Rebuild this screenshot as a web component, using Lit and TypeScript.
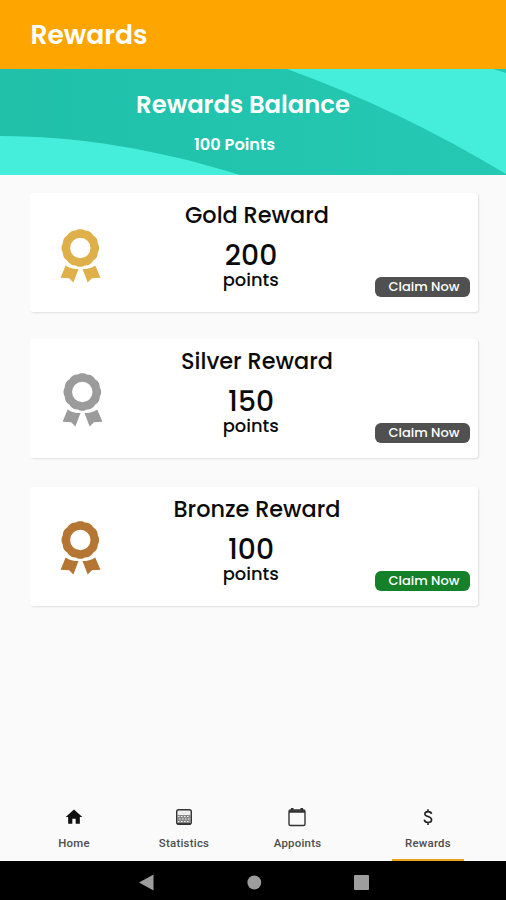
import { LitElement, html, svg, css } from "lit";
import { customElement, property } from "lit/decorators.js";

/** A single line of text, centred in a box that ends at its baseline. */
@customElement("fit-text")
class FitText extends LitElement {
  @property() text = "";
  @property({ type: Number }) size = 16;
  @property({ type: Number }) width = 100;
  @property({ type: Number }) weight = 500;

  static styles = css`
    :host { display: block; line-height: 0; }
    .line { display: block; overflow: visible; fill: currentColor; }
    .glyphs { font-family: inherit; text-anchor: middle; }
  `;

  render() {
    const h = Math.round(this.size * 2) / 2;
    return html`<svg class="line" width=${this.width} height=${h}>
      ${svg`<text class="glyphs" x=${this.width / 2} y=${h} font-size=${this.size} font-weight=${this.weight}>${this.text}</text>`}
    </svg>`;
  }
}

const scallop = (() => {
  const n = 12, steps = 144;
  let d = "";
  for (let i = 0; i < steps; i++) {
    const a = (i / steps) * Math.PI * 2;
    const r = 18.1 + 0.7 * Math.abs(Math.cos((a * n) / 2));
    d += `${i ? "L" : "M"}${(20.3 + r * Math.sin(a)).toFixed(2)} ${(19 - r * Math.cos(a)).toFixed(2)}`;
  }
  return d + "Z M30.5 19A10.2 10.2 0 1 0 10.1 19A10.2 10.2 0 1 0 30.5 19Z";
})();

interface Reward {
  name: string; points: string; tier: string; ready: boolean;
}

@customElement("reward-card")
class RewardCard extends LitElement {
  @property({ attribute: false }) reward!: Reward;

  static styles = css`
    :host { display: block; }
    .card {
      box-sizing: border-box; height: 119px; background: #fff; border-radius: 3px;
      box-shadow: 1px 1px 2px rgba(0, 0, 0, 0.11);
      display: grid; grid-template-columns: 100px 241px 1fr; color: #0b0b0b;
    }
    .medal { padding: 36px 0 0 30px; }
    .medal svg { display: block; }
    .gold { color: #dfb04a; }
    .silver { color: #9b9b9b; padding: 34px 0 0 32px; }
    .bronze { color: #b57633; padding-top: 34px; }
    .info { display: flex; flex-direction: column; align-items: center; }
    .name { margin: 6.5px 0 0 13px; }
    .amount { margin: 14.5px 0 0 0; }
    .unit { margin-top: 3.5px; }
    .action { display: flex; align-items: flex-end; padding-bottom: 15px; }
    .claim {
      font: inherit; border: 0; padding: 0 0 0 12.5px; margin: 0 0 0 4px; width: 95px; height: 20px; border-radius: 6px;
      background: #505050; color: #fff; display: flex; align-items: flex-start;
    }
    .claim fit-text { margin-top: 1px; }
    .ready { background: #15802a; }
  `;

  render() {
    const r = this.reward;
    return html`<div class="card">
      <div class="medal ${r.tier}">
        <svg width="42" height="54" viewBox="0 0 42 54" fill="currentColor">
          <path fill-rule="evenodd" d=${scallop} />
          <path d="M5.6 36.4C9.5 39.2 13.5 40 18.5 40.1L13.4 53.4L9.2 49.2L0.6 48.7Z" />
          <path d="M35.2 36.4C31.3 39.2 27.3 40 22.5 40.1L27.7 53.4L31.9 49.2L40.5 48.7Z" />
        </svg>
      </div>
      <div class="info">
        <fit-text class="name" .text=${r.name} .width=${150} .size=${22.4} .weight=${500}></fit-text>
        <fit-text class="amount" .text=${r.points} .width=${54} .size=${28.2} .weight=${500}></fit-text>
        <fit-text class="unit" text="points" .width=${57.5} .size=${17.9} .weight=${500}></fit-text>
      </div>
      <div class="action">
        <button class="claim ${r.ready ? "ready" : ""}">
          <fit-text text="Claim Now" .width=${72} .size=${13} .weight=${500}></fit-text>
        </button>
      </div>
    </div>`;
  }
}

@customElement("app-root")
class AppRoot extends LitElement {
  static styles = css`
    :host {
      display: flex; flex-direction: column; height: 900px; width: 506px; overflow: hidden;
      background: #fafafa; font-family: Poppins, Inter, "Open Sans", sans-serif;
    }
    .appbar { flex: none; height: 69px; box-sizing: border-box; background: #ffa500; color: #fff; padding: 17px 0 0 29px; }
    .banner { flex: none; height: 106px; display: grid; color: #fff; }
    .banner > * { grid-area: 1 / 1; }
    .waves { display: block; }
    .balance { display: flex; flex-direction: column; align-items: center; }
    .heading { margin: 19px 20px 0 0; }
    .total { margin: 21.5px 37px 0 0; }
    .list { flex: 1; display: flex; flex-direction: column; padding: 18px 0 0 30px; width: 448px; }
    .list reward-card + reward-card { margin-top: 27px; }
    .list reward-card + reward-card + reward-card { margin-top: 29px; }
    .tabs { flex: none; height: 66px; display: grid; grid-template-columns: 36px 76px 34px 76px 37px 76px 57px 72px; }
    .tab {
      box-sizing: border-box; display: flex; flex-direction: column; align-items: center; padding-top: 12px;
      font-family: Roboto, sans-serif; color: #4c4c4c; letter-spacing: 0.25px; border-bottom: 2px solid transparent;
    }
    .tab svg { display: block; color: #111; }
    .tab fit-text { margin-top: 7.5px; }
    .home { grid-column: 2; } .stats { grid-column: 4; } .appts { grid-column: 6; }
    .active { grid-column: 8; border-bottom: 2px solid #eba41c; }
    .system { flex: none; height: 39px; background: #000; }
    .system svg { display: block; }
  `;

  private rewards: Reward[] = [
    { name: "Gold Reward", points: "200", tier: "gold", ready: false },
    { name: "Silver Reward", points: "150", tier: "silver", ready: false },
    { name: "Bronze Reward", points: "100", tier: "bronze", ready: true },
  ];

  render() {
    return html`
      <header class="appbar"><fit-text text="Rewards" .width=${120} .size=${26.6} .weight=${600}></fit-text></header>
      <section class="banner">
        <svg class="waves" width="506" height="106" viewBox="0 0 506 106">
          <defs><linearGradient id="sea"><stop offset="0" stop-color="#20c0a9" /><stop offset="1" stop-color="#25c9b3" /></linearGradient></defs>
          <rect width="506" height="106" fill="url(#sea)" />
          <path fill="#45eedb" d="M0 67C80 67 160 81 240 106H0Z" />
          <path fill="#45eedb" d="M287 0Q400 41 506 105V4L493 0Z" />
        </svg>
        <div class="balance">
          <fit-text class="heading" text="Rewards Balance" .width=${216} .size=${24.3} .weight=${600}></fit-text>
          <fit-text class="total" text="100 Points" .width=${83} .size=${16.2} .weight=${600}></fit-text>
        </div>
      </section>
      <main class="list">${this.rewards.map((r) => html`<reward-card .reward=${r}></reward-card>`)}</main>
      <nav class="tabs">
        <div class="tab home">
          <svg width="20" height="20" viewBox="0 0 24 24" fill="currentColor"><path d="M10 20v-6h4v6h5v-8h3L12 3 2 12h3v8z" /></svg>
          <fit-text text="Home" .width=${32} .size=${11.4} .weight=${500}></fit-text>
        </div>
        <div class="tab stats">
          <svg width="20" height="20" viewBox="0 0 20 20">
            <rect x="2.7" y="2.7" width="14.6" height="14.6" rx="2" fill="#eee" stroke="#333" stroke-width="1.4" />
            <path d="M3 8H17V15.5Q17 17 15.5 17H4.5Q3 17 3 15.5Z" fill="#888" />
            <path d="M4 9.5H16M5 12H16M4 14.5H16" stroke="#f2f2f2" stroke-width="1.2" stroke-dasharray="1.5 1.5" />
            <path d="M3 16.8H17" stroke="#333" stroke-width="1.4" />
          </svg>
          <fit-text text="Statistics" .width=${50} .size=${11.4} .weight=${500}></fit-text>
        </div>
        <div class="tab appts">
          <svg width="20" height="20" viewBox="0 0 20 20" fill="none" stroke="#333" stroke-width="1.4">
            <rect x="2" y="3" width="16" height="15.5" rx="1.5" />
            <path d="M2 4.5H18M5.2 1V4M14.8 1V4" stroke-width="2.6" />
          </svg>
          <fit-text text="Appoints" .width=${47} .size=${11.4} .weight=${500}></fit-text>
        </div>
        <div class="tab active">
          <svg width="20" height="20" viewBox="0 0 20 20" fill="none" stroke="#222" stroke-width="1.6">
            <path d="M13.5 6.8C13.3 5.3 12 4.6 10.1 4.6C8.1 4.6 6.9 5.5 6.9 7C6.9 10.3 13.6 8.9 13.6 12.8C13.6 14.6 12.2 15.5 10.1 15.5C7.9 15.5 6.5 14.5 6.3 12.7M10 2.2V5M10 15V18" />
          </svg>
          <fit-text text="Rewards" .width=${46} .size=${11.4} .weight=${500}></fit-text>
        </div>
      </nav>
      <footer class="system">
        <svg width="506" height="39" viewBox="0 0 506 39" fill="#9d9d9d">
          <path d="M139 21.5L153.5 13.5V29.5Z" /><circle cx="254.3" cy="21.5" r="6.9" />
          <rect x="354" y="14" width="15" height="15" rx="1" />
        </svg>
      </footer>`;
  }
}
